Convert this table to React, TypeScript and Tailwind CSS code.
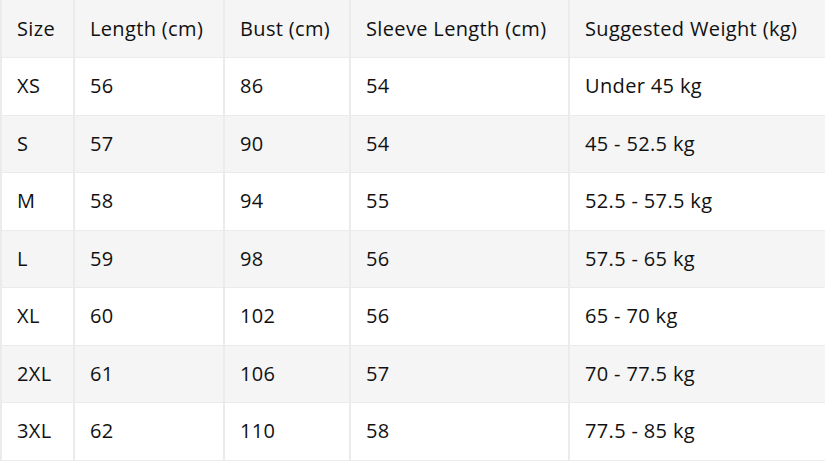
const headers = ['Size', 'Length (cm)', 'Bust (cm)', 'Sleeve Length (cm)', 'Suggested Weight (kg)'];

const rows = [
  ['XS', '56', '86', '54', 'Under 45 kg'],
  ['S', '57', '90', '54', '45 - 52.5 kg'],
  ['M', '58', '94', '55', '52.5 - 57.5 kg'],
  ['L', '59', '98', '56', '57.5 - 65 kg'],
  ['XL', '60', '102', '56', '65 - 70 kg'],
  ['2XL', '61', '106', '57', '70 - 77.5 kg'],
  ['3XL', '62', '110', '58', '77.5 - 85 kg'],
];

const widths = ['w-[73px]', 'w-[150px]', 'w-[126px]', 'w-[219px]', 'w-[257px]'];

export default function App() {
  return (
    <div className="w-[825px] h-[463px] bg-white" style={{ fontFamily: '"Open Sans", "Noto Sans", sans-serif' }}>
      <table className="w-[825px] table-fixed border-collapse text-[20px] tracking-[0.35px] text-[#111]">
        <colgroup>
          {widths.map((w, i) => (
            <col key={i} className={w} />
          ))}
        </colgroup>
        <thead>
          <tr className="bg-[#f5f5f5] h-[57.5px]">
            {headers.map(h => (
              <th key={h} className="border-x-2 border-b border-[#ebebeb] pl-[15px] pr-0 text-left font-normal whitespace-nowrap">
                {h}
              </th>
            ))}
          </tr>
        </thead>
        <tbody>
          {rows.map((r, i) => (
            <tr key={r[0]} className={`h-[57.5px] ${i % 2 === 1 ? 'bg-[#f5f5f5]' : 'bg-white'}`}>
              {r.map((c, j) => (
                <td key={j} className="border-x-2 border-y border-[#ebebeb] pl-[15px] pr-0 whitespace-nowrap">
                  {c}
                </td>
              ))}
            </tr>
          ))}
        </tbody>
      </table>
    </div>
  );
}
